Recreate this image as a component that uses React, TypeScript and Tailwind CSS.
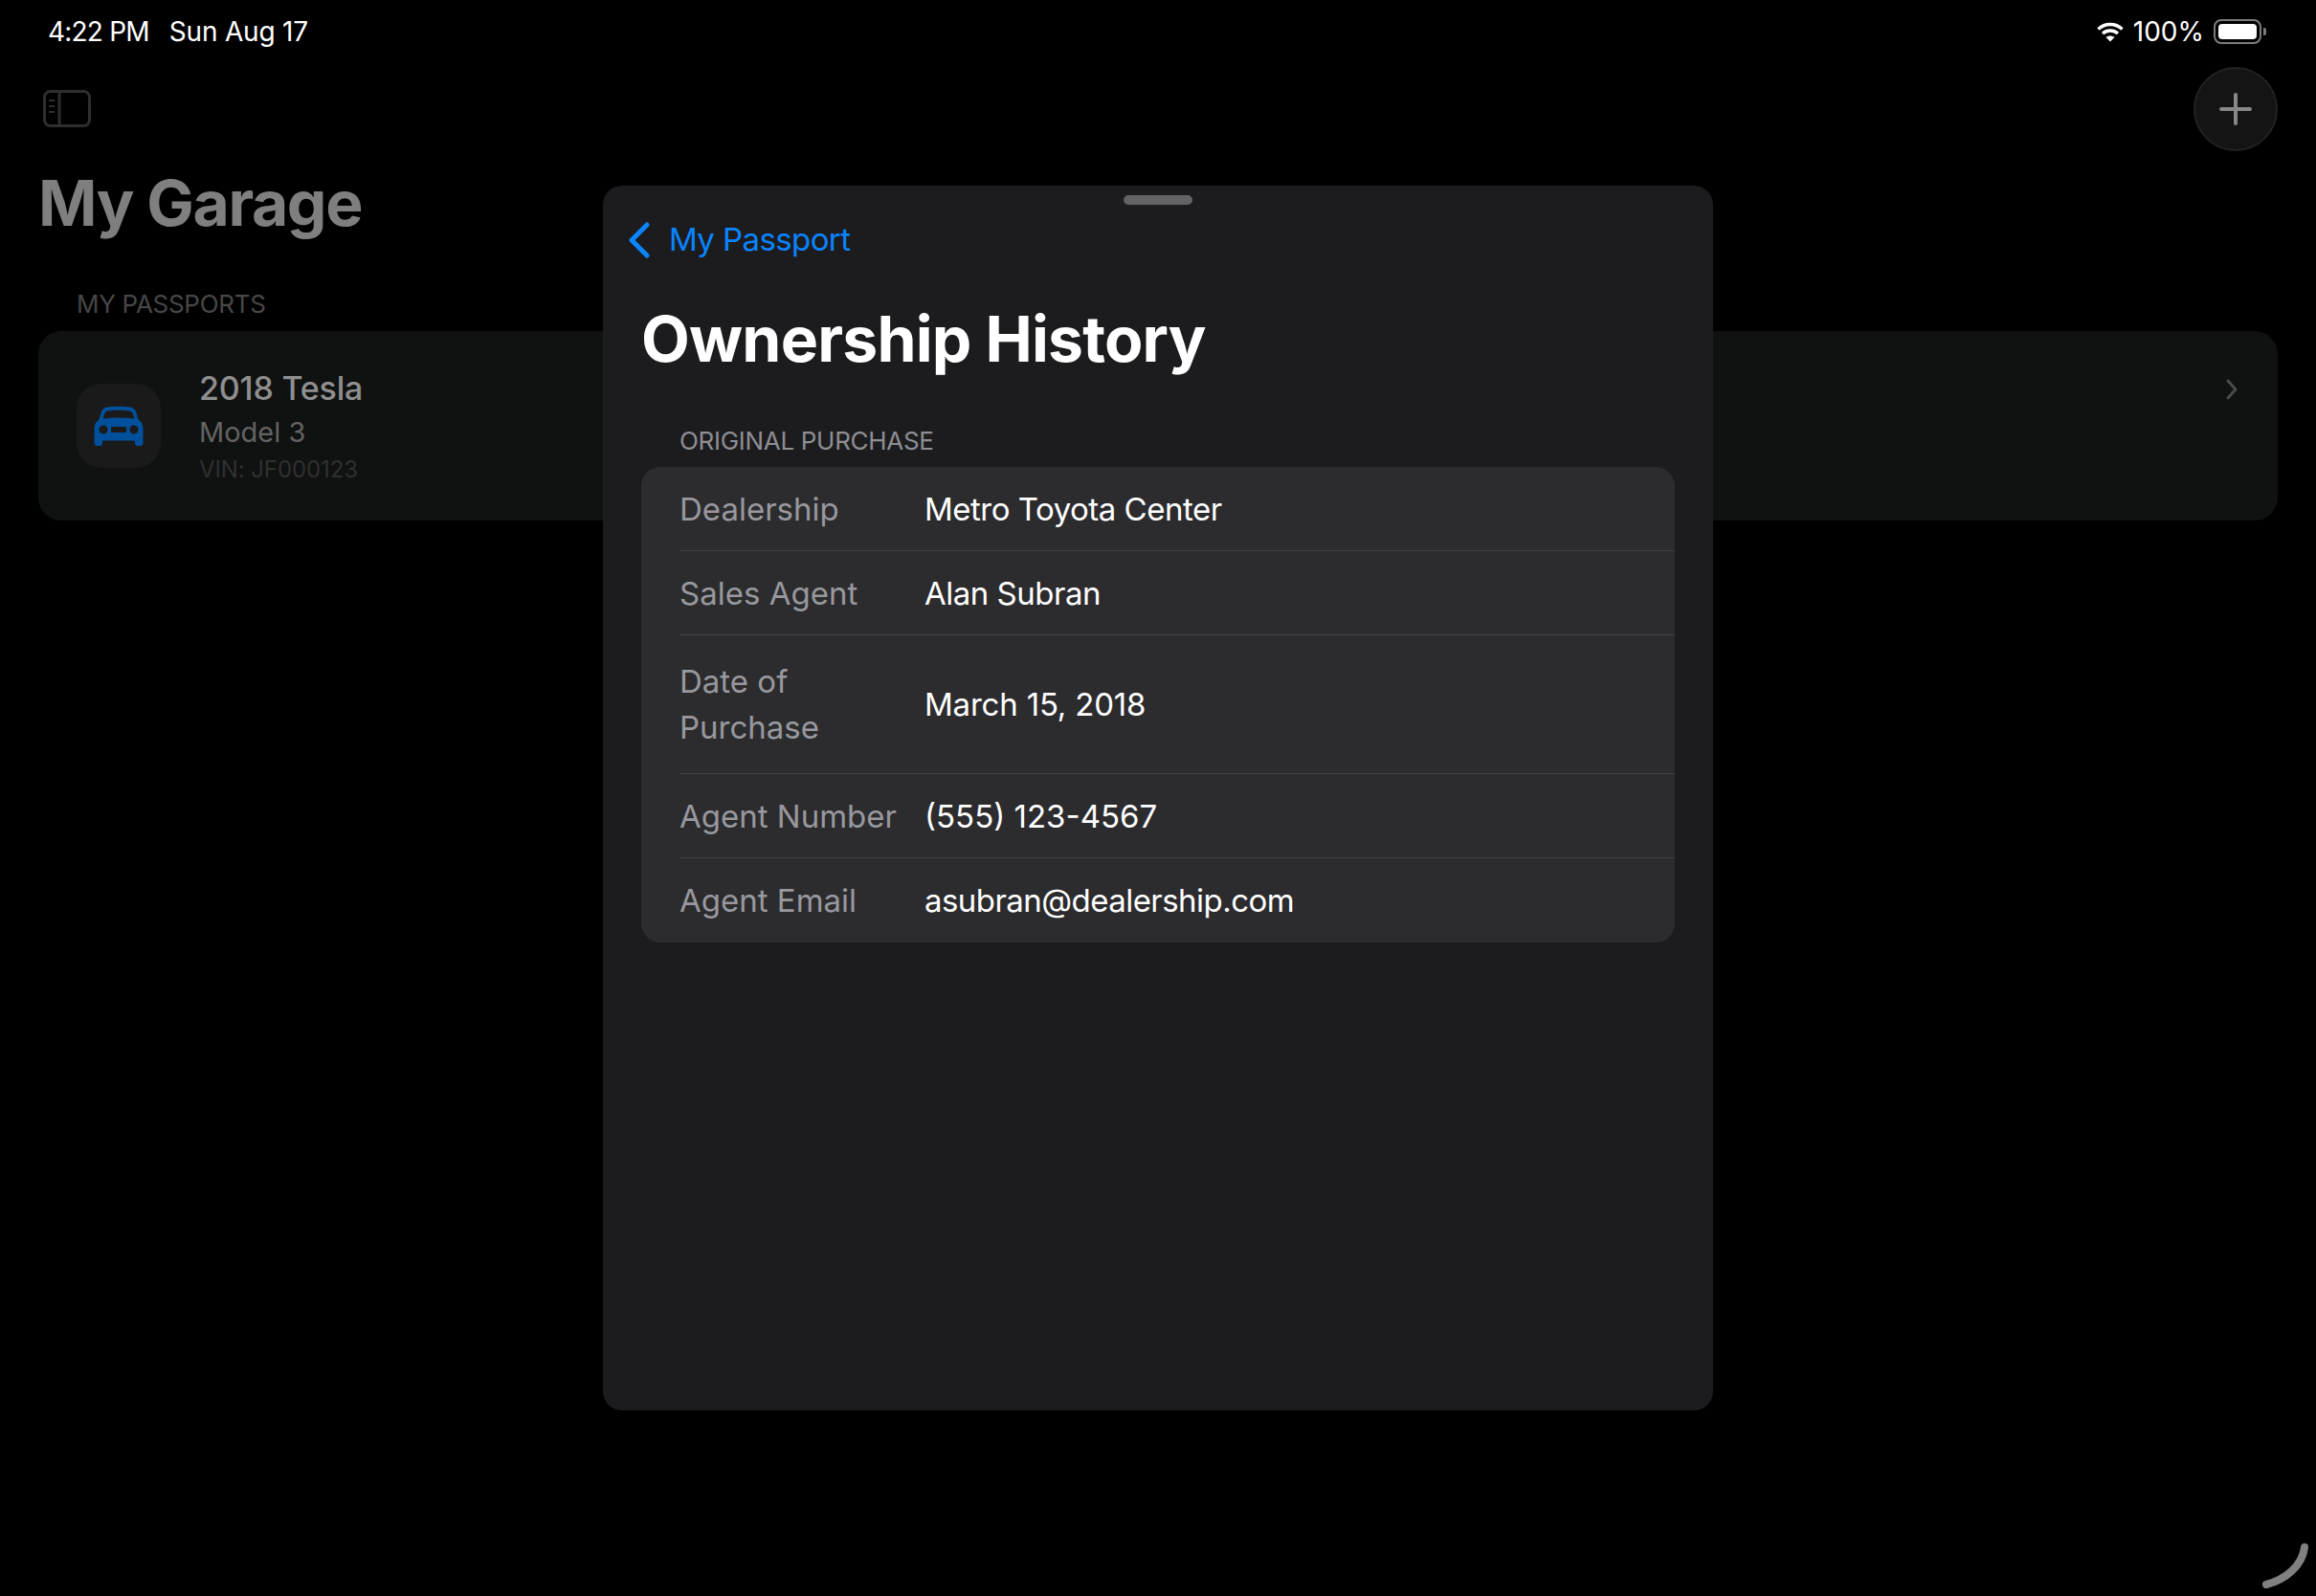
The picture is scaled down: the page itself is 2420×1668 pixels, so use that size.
import React from 'react'

const font = { fontFamily: 'Inter, "Liberation Sans", sans-serif' }

const rows = [
    { label: 'Dealership', value: 'Metro Toyota Center', height: 'h-[87px]', spacing: 'tracking-[-0.5px]' },
    { label: 'Sales Agent', value: 'Alan Subran', height: 'h-[88px]', spacing: 'tracking-[-0.5px]' },
    { label: 'Date of Purchase', value: 'March 15, 2018', height: 'h-[145px]', spacing: 'tracking-[-0.2px]' },
    { label: 'Agent Number', value: '(555) 123-4567', height: 'h-[88px]', spacing: 'tracking-[0px]' },
    { label: 'Agent Email', value: 'asubran@dealership.com', height: 'h-[89px]', spacing: 'tracking-[-0.55px]' },
]

const SidebarIcon = () => (
    <svg width="50" height="40" viewBox="0 0 50 40" fill="none" stroke="#2e2e2e" strokeWidth="3">
        <rect x="1.5" y="1.5" width="47" height="36" rx="6" />
        <path d="M17 1.5V37.5" />
        <path d="M6 11H12M6 17H12M6 23H12" strokeWidth="2" />
    </svg>
)

const CarIcon = () => (
    <svg width="52" height="42" viewBox="0 0 52 42">
        <path
            fill="#00509b"
            fillRule="evenodd"
            d="M14 1.5C19 0.4 33 0.4 38 1.5C42 2.3 43.6 4.5 44.6 8L46.4 14.5C49.6 16.5 51.5 19.5 51.5 24V39C51.5 41 50 42 48.2 42H46C44 42 43 41 43 39V36.5H9V39C9 41 8 42 6 42H3.8C2 42 0.5 41 0.5 39V24C0.5 19.5 2.4 16.5 5.6 14.5L7.4 8C8.4 4.500 10 2.300 14 1.500ZM14.500 5.500C12.500 6 11.600 7 11 9L9.800 13.500C20 12.300 32 12.300 42.200 13.500L41 9C40.400 7 39.500 6 37.500 5.500C32 4.600 20 4.600 14.500 5.500ZM10 20.500A4.500 4.500 0 1 0 10 29.500A4.500 4.500 0 1 0 10 20.500ZM42 20.500A4.500 4.500 0 1 0 42 29.500A4.500 4.500 0 1 0 42 20.500ZM19.500 22C18.500 22 18 22.500 18 23.500V26.500C18 27.500 18.500 28 19.500 28H32.500C33.500 28 34 27.500 34 26.500V23.500C34 22.500 33.500 22 32.500 22Z"
        />
    </svg>
)

const WifiIcon = () => (
    <svg width="28" height="21" viewBox="0 0 28 21" fill="none" stroke="#fff" strokeWidth="3.400">
        <path d="M1.500 7.500C8.500 0.800 19.500 0.800 26.500 7.500" />
        <path d="M6 12C10.500 8 17.500 8 22 12" />
        <path d="M14 20.500L9.500 16C12 14 16 14 18.500 16Z" fill="#fff" stroke="none" />
    </svg>
)

const Battery = () => (
    <div className="flex items-center gap-[2px]">
        <div className="w-[50px] h-[26px] rounded-[8px] border-2 border-[#7c7c7c] p-[3px]">
            <div className="w-full h-full rounded-[4px] bg-white"></div>
        </div>
        <div className="w-[3px] h-[8px] rounded-r-[2px] bg-[#7c7c7c]"></div>
    </div>
)

const App = () => {
    return (
        <div style={font} className="relative w-[2420px] h-[1668px] bg-black overflow-hidden">
            {/* status bar */}
            <div className="flex items-center justify-between h-[44px] pt-[22px] pl-[50px] pr-[52px] text-[28px] text-white">
                <div className="flex items-center gap-[21px]">
                    <span className="tracking-[-0.8px]">4:22 PM</span>
                    <span className="tracking-[-0.2px]">Sun Aug 17</span>
                </div>
                <div className="flex items-center gap-[10px]">
                    <WifiIcon />
                    <span className="tracking-[0px]">100%</span>
                    <Battery />
                </div>
            </div>

            {/* toolbar */}
            <div className="flex items-center justify-between h-[88px] mt-[26px] pl-[45px] pr-[40px]">
                <SidebarIcon />
                <div className="flex items-center justify-center w-[88px] h-[88px] rounded-full bg-[#141414] border-2 border-[#222222]">
                    <svg width="34" height="34" viewBox="0 0 34 34" stroke="#878787" strokeWidth="4" strokeLinecap="round">
                        <path d="M17 2V32M2 17H32" />
                    </svg>
                </div>
            </div>

            {/* garage list */}
            <div className="px-[40px]">
                <h1 className="mt-[14px] text-[66px] leading-[80px] font-bold tracking-[-1.4px] text-[#7f7f7f]">My Garage</h1>
                <div className="mt-[50px] ml-[40px] text-[26px] leading-[32px] tracking-[-0.3px] text-[#474747]">MY PASSPORTS</div>
                <div className="flex items-center justify-between h-[198px] mt-[12px] pl-[40px] pr-[42px] rounded-[24px] bg-[#101111]">
                    <div className="flex items-center gap-[40px]">
                        <div className="flex items-center justify-center w-[88px] h-[88px] rounded-[26px] bg-[#1a1a1a]">
                            <CarIcon />
                        </div>
                        <div className="flex flex-col">
                            <span className="text-[34px] leading-[44px] font-medium tracking-[-0.2px] text-[#8f8f8f]">2018 Tesla</span>
                            <span className="mt-[4px] text-[29px] leading-[40px] text-[#636363]">Model 3</span>
                            <span className="mt-[4px] text-[24px] leading-[30px] tracking-[-0.1px] text-[#303030]">VIN: JF000123</span>
                        </div>
                    </div>
                    <svg className="mb-[77px]" width="12" height="22" viewBox="0 0 12 22" fill="none" stroke="#4a4a4a" strokeWidth="3" strokeLinecap="round" strokeLinejoin="round">
                        <path d="M2 2L10 11L2 20" />
                    </svg>
                </div>
            </div>

            {/* sheet */}
            <div className="absolute left-[630px] top-[194px] w-[1160px] h-[1280px] rounded-[20px] bg-[#1c1c1e] px-[40px]">
                <div className="w-[72px] h-[10px] mt-[10px] mx-auto rounded-full bg-[#636366]"></div>
                <div className="flex items-center gap-[20px] h-[40px] mt-[17px] -ml-[13px] text-[33px] text-[#0a84ff]">
                    <svg width="22" height="38" viewBox="0 0 22 38" fill="none" stroke="#0a84ff" strokeWidth="5" strokeLinecap="round" strokeLinejoin="round">
                        <path d="M19 3L3 19L19 35" />
                    </svg>
                    <span className="tracking-[-0.6px]">My Passport</span>
                </div>
                <h2 className="mt-[43px] text-[66px] leading-[80px] font-bold tracking-[-0.8px] text-white">Ownership History</h2>
                <div className="mt-[51px] ml-[40px] text-[26px] leading-[32px] tracking-[-0.3px] text-[#8e8e93]">ORIGINAL PURCHASE</div>
                <div className="mt-[11px] rounded-[20px] bg-[#2c2c2e]">
                    {rows.map((row, i) => (
                        <div key={row.label} className="pl-[40px]">
                            <div className={`flex items-center ${row.height} ${i > 0 ? 'border-t border-[#414143]' : ''}`}>
                                <span className="w-[256px] pr-[20px] shrink-0 text-[33px] leading-[48px] text-[#98989e]">{row.label}</span>
                                <span className={`text-[33px] leading-[48px] text-white ${row.spacing}`}>{row.value}</span>
                            </div>
                        </div>
                    ))}
                </div>
            </div>

            {/* pencil hint */}
            <svg className="absolute right-[6px] bottom-[6px]" width="50" height="50" viewBox="0 0 50 50" fill="none" stroke="#808080" strokeWidth="8" strokeLinecap="round">
                <path d="M44 5C42 24 24 39 4 44" />
            </svg>
        </div>
    )
}

export default App
